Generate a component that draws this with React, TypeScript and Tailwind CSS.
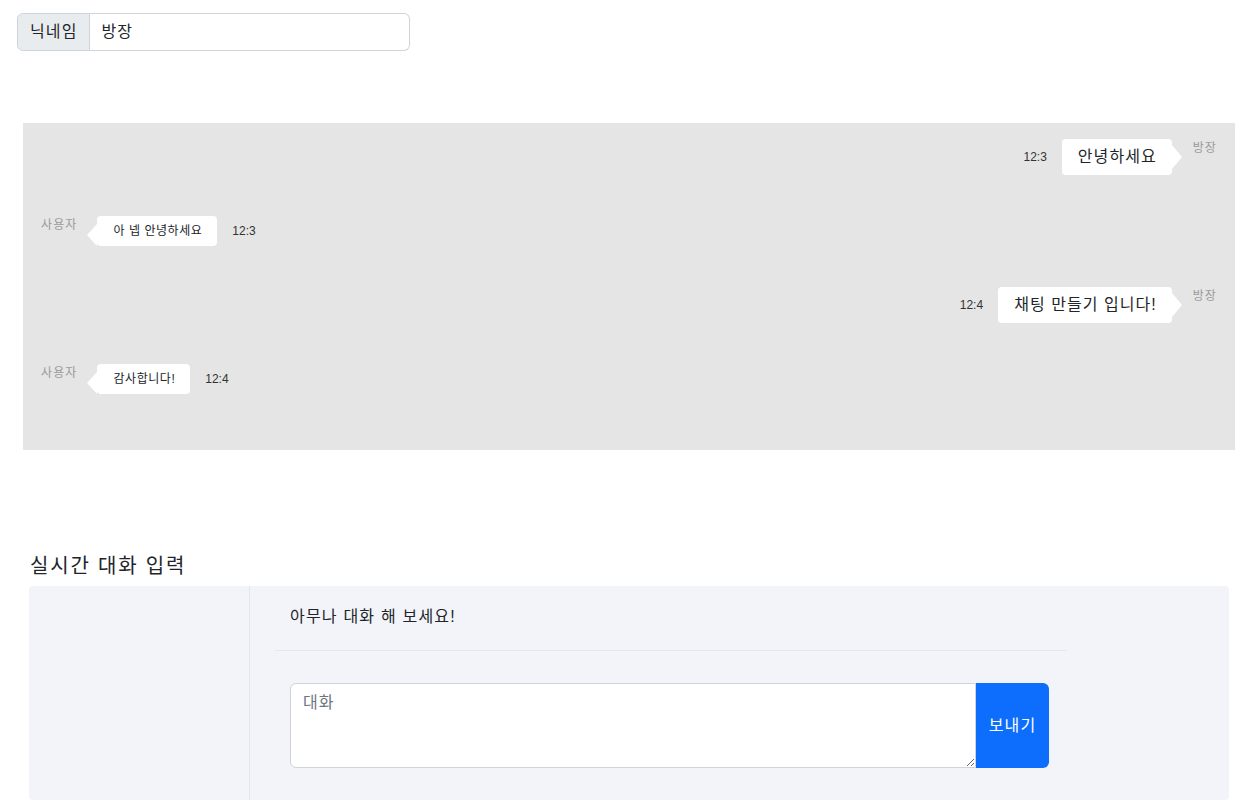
const font = "font-['Liberation_Sans','Noto_Sans_CJK_KR',sans-serif]";

type Msg = { id: number; mine: boolean; name: string; text: string; time: string };

const messages: Msg[] = [
  { id: 1, mine: true, name: "방장", text: "안녕하세요", time: "12:3" },
  { id: 2, mine: false, name: "사용자", text: "아 넵 안녕하세요", time: "12:3" },
  { id: 3, mine: true, name: "방장", text: "채팅 만들기 입니다!", time: "12:4" },
  { id: 4, mine: false, name: "사용자", text: "감사합니다!", time: "12:4" },
];

function MyMessage({ msg }: { msg: Msg }) {
  return (
    <div className="flex justify-end items-center">
      <span className="text-[12px] leading-[18px] tracking-normal text-[#333]">{msg.time}</span>
      <div className="relative ml-[15px] bg-white rounded-[4px] pl-4 pr-[15px] py-1.5 text-[16px] leading-6 tracking-[0.065em] text-[#212529]">
        {msg.text}
        <span className="absolute left-full top-[6px] w-0 h-0 border-y-[12px] border-y-transparent border-l-[10px] border-l-white" />
      </div>
      <span className="self-start ml-[21px] text-[12px] leading-[18px] text-[#9a9a9a]">{msg.name}</span>
    </div>
  );
}

function OtherMessage({ msg }: { msg: Msg }) {
  return (
    <div className="flex justify-start items-center">
      <span className="self-start mr-[20px] text-[12px] leading-[16px] mt-[1px] text-[#9a9a9a]">{msg.name}</span>
      <div className="relative bg-white rounded-[4px] pl-4 pr-[15px] py-1.5 text-[12px] leading-[18px] tracking-[0.045em] text-[#212529]">
        {msg.text}
        <span className="absolute right-full top-[8px] w-0 h-0 border-y-[11px] border-y-transparent border-r-[10px] border-r-white" />
      </div>
      <span className="ml-[15px] text-[12px] leading-[18px] tracking-normal text-[#333]">{msg.time}</span>
    </div>
  );
}

export default function App() {
  return (
    <div className={`${font} tracking-[0.07em] bg-white min-h-[811px] text-[#212529]`}>
      {/* nickname */}
      <div className="pt-[13px] pl-[17px]">
        <div className="flex w-[393px] h-[38px] text-[16px] leading-6">
          <span className="flex items-center pl-3 pr-[11px] bg-[#e9ecef] border border-[#ced4da] rounded-l-[6px]">닉네임</span>
          <input
            defaultValue="방장"
            className="flex-1 min-w-0 px-3 tracking-[0.07em] border border-l-0 border-[#ced4da] rounded-r-[6px] outline-none bg-white"
          />
        </div>
      </div>

      {/* chat log */}
      <div className="mt-[72px] ml-[23px] w-[1212px] bg-[#e5e5e5] px-[18px] pt-4 pb-[56px] flex flex-col gap-[41px]">
        {messages.map((m) => (m.mine ? <MyMessage key={m.id} msg={m} /> : <OtherMessage key={m.id} msg={m} />))}
      </div>

      {/* input */}
      <h2 className="mt-[101px] ml-[30px] text-[20px] leading-[30px] h-[30px] tracking-[0.09em]">실시간 대화 입력</h2>
      <div className="mt-[5px] ml-[29px] w-[1200px] bg-[#f3f4f9] rounded-[4px] flex">
        <div className="w-[221px] border-r border-[#e2e5ea]" />
        <div className="ml-[25px] w-[792px] pt-[19px] pb-[32px]">
          <p className="px-[15px] text-[16px] leading-6 tracking-[0.075em]">아무나 대화 해 보세요!</p>
          <div className="mt-[21px] h-px bg-[#e3e8ee]" />
          <div className="mt-[32px] pl-[15px] pr-[18px] flex h-[85px]">
            <textarea
              placeholder="대화"
              className="flex-1 px-3 pt-[7px] pb-1.5 text-[16px] leading-6 tracking-[0.07em] bg-white border border-[#ced4da] rounded-l-[6px] outline-none placeholder:text-[#6c757d]"
            />
            <button className="w-[73px] bg-[#0d6efd] text-white text-[16px] leading-6 tracking-[0.07em] rounded-r-[6px]">보내기</button>
          </div>
        </div>
      </div>
    </div>
  );
}
